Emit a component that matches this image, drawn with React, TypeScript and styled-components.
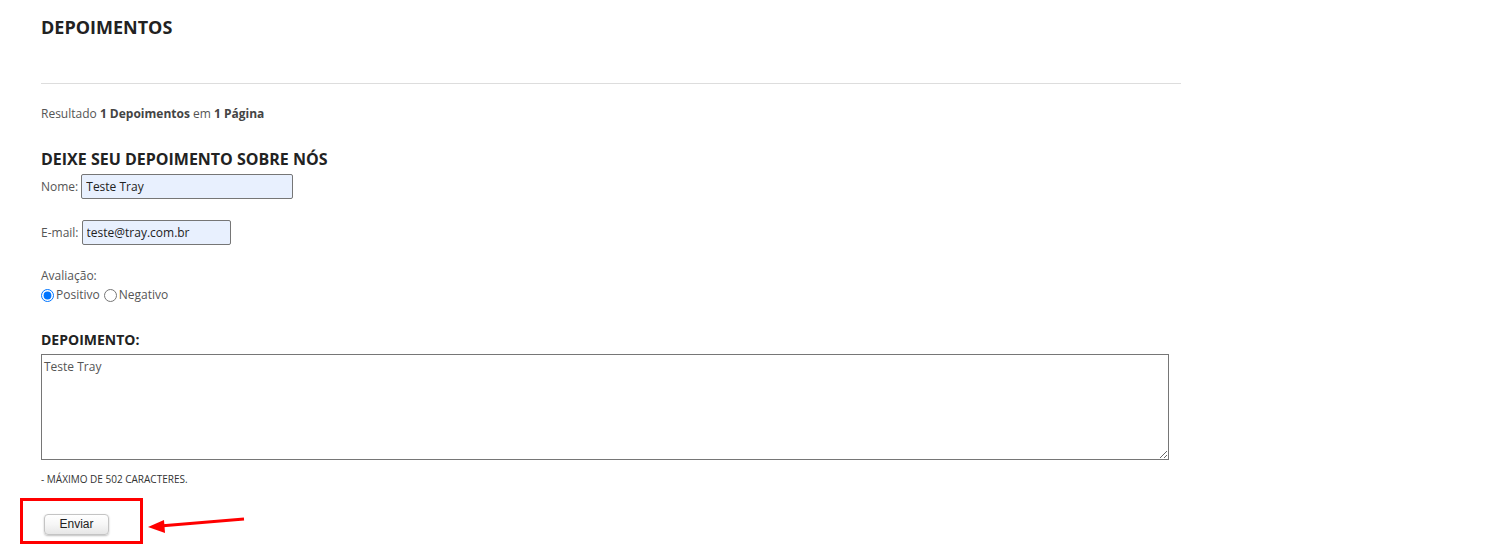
import React, { useState } from 'react';
import styled, { createGlobalStyle } from 'styled-components';

const GlobalStyle = createGlobalStyle`
  body {
    margin: 0;
    background: #fff;
    font-family: "Open Sans", "Liberation Sans", sans-serif;
    color: #555;
  }
`;

const Page = styled.div`
  position: relative;
  width: 1140px;
  padding: 15px 0 20px 41px;
`;

const Title = styled.h1`
  margin: 0;
  font-size: 18px;
  font-weight: bold;
  color: #222;
  line-height: 25px;
`;

const Divider = styled.hr`
  margin: 43px 0 0;
  border: none;
  border-top: 1px solid #ddd;
`;

const Result = styled.p`
  margin: 21px 0 0;
  font-size: 12px;
  line-height: 18px;

  b {
    color: #444;
  }
`;

const SectionTitle = styled.h2`
  margin: 26px 0 0;
  font-size: 16px;
  font-weight: bold;
  color: #222;
  line-height: 20px;
`;

const Field = styled.div<{ $gap?: number }>`
  display: flex;
  align-items: center;
  gap: 3px;
  margin-top: ${(p) => p.$gap ?? 0}px;
  font-size: 12px;
`;

const TextInput = styled.input<{ $width: number }>`
  box-sizing: border-box;
  width: ${(p) => p.$width}px;
  height: 25px;
  padding: 0 4px;
  border: 1px solid #767676;
  border-radius: 2px;
  background: #e8f0fe;
  font-family: "Open Sans", "Liberation Sans", sans-serif;
  font-size: 12px;
  color: #222;
`;

const Rating = styled.div`
  margin-top: 22px;
  font-size: 12px;
  line-height: 18px;
`;

const RadioRow = styled.div`
  display: flex;
  align-items: center;
  margin-top: 1px;

  label {
    display: flex;
    align-items: center;
  }

  input {
    margin: 0 2px 0 0;
    width: 13px;
    height: 13px;
  }
`;

const Spacer = styled.span`
  width: 4px;
`;

const Label = styled.div`
  margin-top: 26px;
  font-size: 14px;
  font-weight: bold;
  color: #222;
  line-height: 20px;
`;

const TextArea = styled.textarea`
  display: block;
  box-sizing: border-box;
  width: 1128px;
  height: 106px;
  margin-top: 4px;
  padding: 3px 2px;
  border: 1px solid #767676;
  font-family: "Open Sans", "Liberation Sans", sans-serif;
  font-size: 12px;
  color: #555;
`;

const Hint = styled.div`
  margin-top: 12px;
  font-size: 10px;
  color: #333;
  text-transform: uppercase;
`;

const ButtonRow = styled.div`
  padding: 25px 0 0 3px;
`;

const SendButton = styled.button`
  width: 65px;
  height: 21px;
  border: 1px solid #c4c4c4;
  border-radius: 4px;
  background: linear-gradient(#fff 0%, #f6f6f6 50%, #e6e6e6 100%);
  box-shadow: 0 1px 2px rgba(0, 0, 0, 0.25);
  font-family: "Liberation Sans", Arial, sans-serif;
  font-size: 12px;
  color: #222;
  cursor: pointer;
`;

const HighlightBox = styled.div`
  position: absolute;
  left: 20px;
  top: 498px;
  width: 123px;
  height: 46px;
  box-sizing: border-box;
  border: 3px solid #f00;
  pointer-events: none;
`;

const Arrow = styled.svg`
  position: absolute;
  left: 140px;
  top: 508px;
  pointer-events: none;
`;

const App = () => {
  const [name, setName] = useState('Teste Tray');
  const [email, setEmail] = useState('teste@tray.com.br');
  const [rating, setRating] = useState('positivo');
  const [text, setText] = useState('Teste Tray');

  return (
    <>
      <GlobalStyle />
      <Page>
        <Title>DEPOIMENTOS</Title>
        <Divider />
        <Result>
          Resultado <b>1 Depoimentos</b> em <b>1 Página</b>
        </Result>

        <SectionTitle>DEIXE SEU DEPOIMENTO SOBRE NÓS</SectionTitle>
        <Field $gap={5}>
          Nome:
          <TextInput $width={212} value={name} onChange={(e) => setName(e.target.value)} />
        </Field>
        <Field $gap={21}>
          E-mail:
          <TextInput $width={149} value={email} onChange={(e) => setEmail(e.target.value)} />
        </Field>

        <Rating>
          Avaliação:
          <RadioRow>
            <label>
              <input
                type="radio"
                name="rating"
                checked={rating === 'positivo'}
                onChange={() => setRating('positivo')}
              />
              Positivo
            </label>
            <Spacer />
            <label>
              <input
                type="radio"
                name="rating"
                checked={rating === 'negativo'}
                onChange={() => setRating('negativo')}
              />
              Negativo
            </label>
          </RadioRow>
        </Rating>

        <Label>DEPOIMENTO:</Label>
        <TextArea value={text} onChange={(e) => setText(e.target.value)} />
        <Hint>- Máximo de 502 caracteres.</Hint>

        <ButtonRow>
          <SendButton>Enviar</SendButton>
        </ButtonRow>

        <HighlightBox />
        <Arrow width="110" height="30" viewBox="0 0 110 30">
          <line x1="104" y1="11" x2="20" y2="18" stroke="#f00" strokeWidth="3" />
          <polygon points="8,19 24,12 25,25" fill="#f00" />
        </Arrow>
      </Page>
    </>
  );
};

export default App;
